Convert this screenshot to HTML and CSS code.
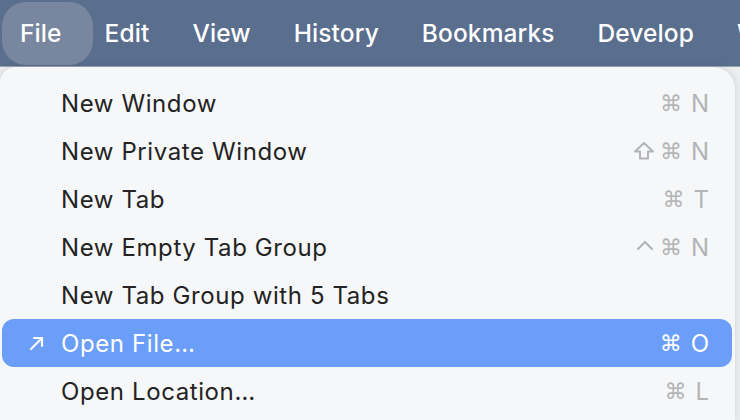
FILE: index.html
```html
<!DOCTYPE html>
<html lang="en">
<head>
    <meta charset="UTF-8">
    <title>File menu</title>
    <link rel="stylesheet" href="styles.css">
</head>
<body>

<div class="menubar">
    <span class="menu-title active">File</span>
    <span class="menu-title">Edit</span>
    <span class="menu-title">View</span>
    <span class="menu-title">History</span>
    <span class="menu-title">Bookmarks</span>
    <span class="menu-title">Develop</span>
    <span class="menu-title">Window</span>
</div>

<div class="menu">
    <div class="menu-item">
        <span class="label">New Window</span>
        <span class="keys"><span class="key">⌘</span><span>N</span></span>
    </div>
    <div class="menu-item">
        <span class="label">New Private Window</span>
        <span class="keys">
            <svg class="key-icon" width="22" height="20" viewBox="0 0 22 20">
                <path d="M11 2 L20 10.5 H15 V17.5 H7 V10.5 H2 Z" fill="none" stroke="currentColor" stroke-width="2" stroke-linejoin="round"/>
            </svg>
            <span class="key">⌘</span><span>N</span>
        </span>
    </div>
    <div class="menu-item">
        <span class="label">New Tab</span>
        <span class="keys"><span class="key">⌘</span><span>T</span></span>
    </div>
    <div class="menu-item">
        <span class="label">New Empty Tab Group</span>
        <span class="keys">
            <svg class="key-icon" width="20" height="20" viewBox="0 0 20 20">
                <path d="M3 12 L10 5 L17 12" fill="none" stroke="currentColor" stroke-width="2.2" stroke-linecap="round" stroke-linejoin="round"/>
            </svg>
            <span class="key">⌘</span><span>N</span>
        </span>
    </div>
    <div class="menu-item">
        <span class="label">New Tab Group with 5 Tabs</span>
    </div>
    <div class="menu-item selected">
        <svg class="item-icon" width="18" height="18" viewBox="0 0 18 18">
            <path d="M3 15 L14 4 M6 4 H14 V12" fill="none" stroke="#fff" stroke-width="2.2" stroke-linecap="round" stroke-linejoin="round"/>
        </svg>
        <span class="label">Open File…</span>
        <span class="keys"><span class="key">⌘</span><span>O</span></span>
    </div>
    <div class="menu-item">
        <span class="label">Open Location…</span>
        <span class="keys"><span class="key">⌘</span><span>L</span></span>
    </div>
</div>

</body>
</html>
```

FILE: styles.css
```css
:root {
    --bar-blue: #5a6e8d;
    --bar-pill: #7886a0;
    --menu-bg: #f6f7f9;
    --select-blue: #6a9ef8;
    --text-dark: #232323;
    --key-gray: #b3b4b7;
}

body {
    margin: 0;
    padding: 0;
    width: 740px;
    height: 420px;
    overflow: hidden;
    background-color: #eceef1;
    font-family: Inter, "Noto Sans", sans-serif;
    display: flex;
    flex-direction: column;
}

.menubar {
    flex: none;
    height: 66px;
    background-color: var(--bar-blue);
    border-bottom: 1px solid #9aa4b4;
    display: flex;
    align-items: center;
    gap: 43px;
    padding-left: 20px;
    white-space: nowrap;
    overflow: hidden;
}

.menu-title {
    color: #fff;
    font-size: 24.5px;
    font-weight: 500;
    letter-spacing: 0.1px;
    position: relative;
    z-index: 0;
}

/* pastille derrière le menu ouvert */
.menu-title.active::before {
    content: "";
    position: absolute;
    left: -18px;
    right: -31px;
    top: -16px;
    bottom: -17px;
    border-radius: 24px;
    background-color: var(--bar-pill);
    z-index: -1;
}

.menu {
    flex: 1;
    min-height: 0;
    overflow: hidden;
    margin-right: 5px;
    background-color: var(--menu-bg);
    border-radius: 16px 22px 0 0;
    padding: 12px 3px 0 2px;
    box-shadow: 0 0 8px rgba(0, 0, 0, 0.12);
}

.menu-item {
    flex: none;
    height: 48px;
    display: flex;
    align-items: center;
    padding: 0 23px 0 59px;
    border-radius: 12px;
    color: var(--text-dark);
    font-size: 24px;
    letter-spacing: 0.6px;
    position: relative;
}

.menu-item .label {
    flex: 1;
    white-space: nowrap;
}

.keys {
    display: flex;
    align-items: center;
    gap: 9px;
    color: var(--key-gray);
    font-size: 24px;
    letter-spacing: 0;
}

.key {
    font-family: "DejaVu Sans", sans-serif;
    font-size: 22px;
}

.key-icon {
    margin-right: -4px;
}

.menu-item.selected {
    background-color: var(--select-blue);
    color: #fff;
}

.menu-item.selected .keys {
    color: #fff;
}

.item-icon {
    position: absolute;
    left: 26px;
    top: 15px;
}
```
